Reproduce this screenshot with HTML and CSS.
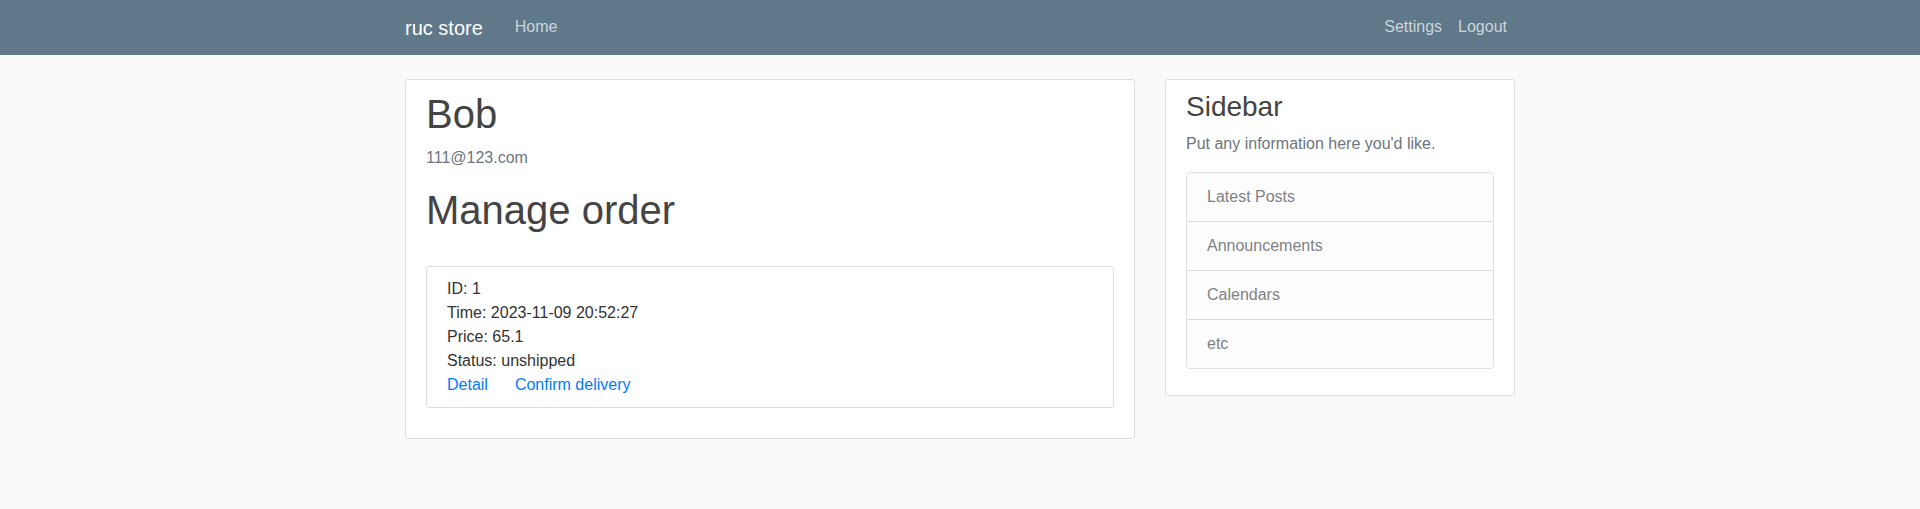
FILE: index.html
```html
<!DOCTYPE html>
<html lang="en">
<head>
<meta charset="utf-8">
<title>ruc store</title>
<link rel="stylesheet" href="styles.css">
</head>
<body>
<header class="site-header">
  <nav class="navbar">
    <div class="container nav-inner">
      <a class="brand" href="#">ruc store</a>
      <div class="nav-left">
        <a class="nav-link" href="#">Home</a>
      </div>
      <div class="nav-right">
        <a class="nav-link" href="#">Settings</a>
        <a class="nav-link" href="#">Logout</a>
      </div>
    </div>
  </nav>
</header>
<main class="container main">
  <div class="row">
    <div class="col-main">
      <div class="content-section">
        <h2 class="account-heading">Bob</h2>
        <p class="text-secondary">111@123.com</p>
        <h1 class="page-title">Manage order</h1>
        <div class="content-section order">
          <div>ID: 1</div>
          <div>Time: 2023-11-09 20:52:27</div>
          <div>Price: 65.1</div>
          <div>Status: unshipped</div>
          <div class="order-links">
            <a href="#" class="link">Detail</a>
            <a href="#" class="link">Confirm delivery</a>
          </div>
        </div>
      </div>
    </div>
    <div class="col-side">
      <div class="content-section">
        <h3 class="side-title">Sidebar</h3>
        <p class="text-muted">Put any information here you'd like.</p>
        <ul class="list-group">
          <li class="list-group-item">Latest Posts</li>
          <li class="list-group-item">Announcements</li>
          <li class="list-group-item">Calendars</li>
          <li class="list-group-item">etc</li>
        </ul>
      </div>
    </div>
  </div>
</main>
</body>
</html>
```
FILE: styles.css
```css
* { box-sizing: border-box; }

body {
  margin: 0;
  background: #fafafa;
  color: #333333;
  font-family: "Liberation Sans", Arial, sans-serif;
  font-size: 16px;
  line-height: 1.5;
}

a { text-decoration: none; }

.container {
  width: 1140px;
  margin: 0 auto;
  padding: 0 15px;
}

.navbar {
  background: #5f788a;
  height: 55px;
  display: flex;
  align-items: center;
}

.nav-inner {
  display: flex;
  align-items: center;
}

.brand {
  color: #ffffff;
  font-size: 20px;
  line-height: 30px;
  padding: 5px 0;
  margin-right: 24px;
}

.nav-left, .nav-right {
  display: flex;
}

.nav-right { margin-left: auto; }

.nav-link {
  color: #cbd5db;
  padding: 7px 8px 9px;
  line-height: 24px;
}

.main {
  margin-top: 24px;
}

.row {
  display: flex;
  margin: 0 -15px;
  align-items: flex-start;
}

.col-main {
  width: 66.6667%;
  padding: 0 15px;
}

.col-side {
  width: 33.3333%;
  padding: 0 15px;
}

.content-section {
  background: #ffffff;
  padding: 10px 20px;
  border: 1px solid #dddddd;
  border-radius: 3px;
  margin-bottom: 20px;
}

h1, h2, h3 {
  color: #444444;
  font-weight: 500;
  line-height: 1.2;
  margin: 0 0 8px;
}

.account-heading { font-size: 40px; }
.page-title { font-size: 40px; }
.side-title { font-size: 28px; }

p { margin: 0 0 16px; }

.text-secondary, .text-muted { color: #6c757d; }

.order {
  margin-top: 32px;
}

.order-links {
  display: flex;
  gap: 27px;
}

.link { color: #007bff; }

.list-group {
  list-style: none;
  margin: 0 0 16px;
  padding: 0;
  border: 1px solid rgba(0,0,0,.125);
  border-radius: 4px;
  overflow: hidden;
}

.list-group-item {
  padding: 12px 20px;
  color: #818182;
  background: #fdfdfe;
  border-top: 1px solid rgba(0,0,0,.125);
}

.list-group-item:first-child { border-top: 0; }
```
